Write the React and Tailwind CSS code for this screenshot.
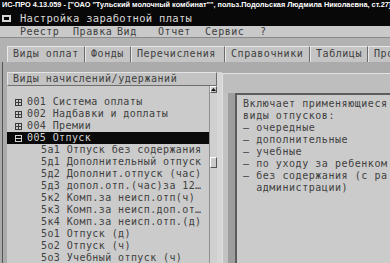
import React from 'react';

function TreeBox({ minus, light }) {
  const c = light ? '#d2d2d2' : '#3a3a3a';
  return (
    <svg width="7" height="7" viewBox="0 0 7 7" className="block">
      <rect x="0.5" y="0.5" width="6" height="6" fill="none" stroke={c} />
      <line x1="1" y1="3.5" x2="6" y2="3.5" stroke={c} />
      {!minus && <line x1="3.5" y1="1" x2="3.5" y2="6" stroke={c} />}
    </svg>
  );
}

const rows = [
  { t: '001 Система оплаты', icon: 'plus' },
  { t: '002 Надбавки и доплаты', icon: 'plus' },
  { t: '004 Премии', icon: 'plus' },
  { t: '005 Отпуск', icon: 'minus', sel: true },
  { t: '5а1 Отпуск без содержания' },
  { t: '5д1 Дополнительный отпуск' },
  { t: '5д2 Дополнит.отпуск (час)' },
  { t: '5д3 допол.отп.(час)за 12…' },
  { t: '5к2 Комп.за неисп.отп(ч)' },
  { t: '5к3 Комп.за неисп.доп.от…' },
  { t: '5к4 Комп.за неисп.отп.(д)' },
  { t: '5о1 Отпуск (д)' },
  { t: '5о2 Отпуск (ч)' },
  { t: '5о3 Учебный отпуск (ч)' },
];

const tabs = [
  { t: 'Виды оплат', w: 'w-[78px]' },
  { t: 'Фонды', w: 'w-[46px]' },
  { t: 'Перечисления', w: 'w-[94px]' },
  { t: 'Справочники', w: 'w-[85px]' },
  { t: 'Таблицы', w: 'w-[58px]' },
  { t: 'Прочее', w: 'w-[60px]' },
];

const info = [
  'Включает применяющиеся',
  'виды отпусков:',
  '– очередные',
  '– дополнительные',
  '– учебные',
  '– по уходу за ребенком',
  '– без содержания (с ра',
  '  администрации)',
];

export default function App() {
  return (
    <div className="w-[390px] h-[263px] overflow-hidden flex flex-col bg-[#ababab] font-['DejaVu_Sans_Mono','Liberation_Mono',monospace] text-[10px] tracking-[0.55px] text-[#404040]">
      {/* window title */}
      <div className="h-[10px] bg-[#080808] text-white font-['Liberation_Sans',Arial,sans-serif] font-bold text-[7.35px] tracking-normal leading-[10px] pl-[2px] whitespace-nowrap overflow-hidden">
        ИС-ПРО 4.13.059 - ["ОАО "Тульский молочный комбинат"", польз.Подольская Людмила Николаевна, ст.27]
      </div>
      {/* caption */}
      <div className="h-[16px] bg-[#080808] flex items-center">
        <div className="ml-[2px] w-[9px] h-[7px] bg-[#d4d4d4] p-[2px] flex shrink-0">
          <div className="flex-1 bg-black" />
        </div>
        <span className="ml-[9px] text-[#d8d8d8] text-[10.5px] tracking-[0.3px] leading-[14px] whitespace-nowrap">Настройка заработной платы</span>
      </div>
      {/* menu */}
      <div className="h-[12px] bg-[#c9c9c9] border-b border-[#8a8a8a] flex items-center leading-[11px] whitespace-nowrap">
        <span className="ml-[20px] w-[53px] shrink-0">Реестр</span>
        <span className="w-[44px] shrink-0">Правка</span>
        <span className="w-[41px] shrink-0">Вид</span>
        <span className="w-[47px] shrink-0">Отчет</span>
        <span className="w-[55px] shrink-0">Сервис</span>
        <span>?</span>
      </div>
      {/* band */}
      <div className="h-[8px] bg-[#b2b2b2]" />
      {/* tabs */}
      <div className="h-[16px] flex bg-[#b2b2b2] whitespace-nowrap overflow-hidden">
        <div className="w-[7px] shrink-0" />
        {tabs.map((tab) => (
          <div
            key={tab.t}
            className={`${tab.w} shrink-0 h-[16px] bg-[#c4c4c4] border-t border-l border-r border-t-[#e8e8e8] border-l-[#e8e8e8] border-r-[#6a6a6a] pl-[5px] leading-[14px]`}
          >
            {tab.t}
          </div>
        ))}
      </div>
      {/* content */}
      <div className="flex-1 flex min-h-0">
        <div className="w-[3px] shrink-0 border-r border-[#555]" />
        {/* left panel */}
        <div className="w-[214px] shrink-0 flex flex-col pt-[10px] pl-[4px] min-h-0">
          <div className="h-[14px] bg-[#c3c3c3] border border-t-[#e4e4e4] border-l-[#e4e4e4] border-r-[#6e6e6e] border-b-[#6e6e6e] pl-[5px] leading-[12px] whitespace-nowrap overflow-hidden">
            Виды начислений/удержаний
          </div>
          <div className="flex-1 flex min-h-0">
            <div className="flex-1 bg-[#cbcbcb] pt-[10px] overflow-hidden tracking-[0.4px]">
              {rows.map((r) => (
                <div
                  key={r.t}
                  className={`h-[12px] flex items-center whitespace-nowrap leading-[12px] ${r.sel ? 'bg-[#0a0a0a] text-[#d4d4d4]' : 'text-[#404040]'} ${r.icon ? 'pl-[8px]' : 'pl-[34px]'}`}
                >
                  {r.icon && (
                    <span className="mr-[5px] flex">
                      <TreeBox minus={r.icon === 'minus'} light={r.sel} />
                    </span>
                  )}
                  {r.t}
                </div>
              ))}
            </div>
            <div className="w-[8px] shrink-0 flex flex-col bg-[#d0d0d0] border-l border-[#909090]">
              <div className="h-[7px] bg-[#c8c8c8] border border-t-white border-l-white border-r-[#555] border-b-[#555] flex items-center justify-center">
                <svg width="5" height="3" viewBox="0 0 5 3" className="block">
                  <path d="M2.5 0 L5 3 L0 3 Z" fill="#111" />
                </svg>
              </div>
              <div className="h-[64px]" />
              <div className="h-[11px] bg-[#cacaca] border border-t-white border-l-white border-r-[#555] border-b-[#555]" />
            </div>
          </div>
        </div>
        <div className="w-[5px] shrink-0 mt-[10px] bg-[#d6d6d6]" />
        {/* right panel */}
        <div className="flex-1 flex flex-col pt-[11px] min-w-0">
          <div className="flex-1 flex flex-col border-t border-l border-[#e2e2e2] bg-[#bebebe]">
            <div className="h-[19px]" />
            <div className="flex-1 flex min-h-0">
              <div className="w-[5px] shrink-0 bg-[#c2c2c2]" />
              <div className="w-[7px] shrink-0 bg-[#9d9d9d]" />
              <div className="flex-1 min-w-0 border-t-2 border-l-2 border-[#5c5c5c] bg-[#cbcbcb] pt-[3px] pl-[6px] overflow-hidden">
                {info.map((l, i) => (
                  <div key={i} className="h-[12px] leading-[12px] whitespace-pre">
                    {l}
                  </div>
                ))}
              </div>
            </div>
          </div>
        </div>
      </div>
    </div>
  );
}
